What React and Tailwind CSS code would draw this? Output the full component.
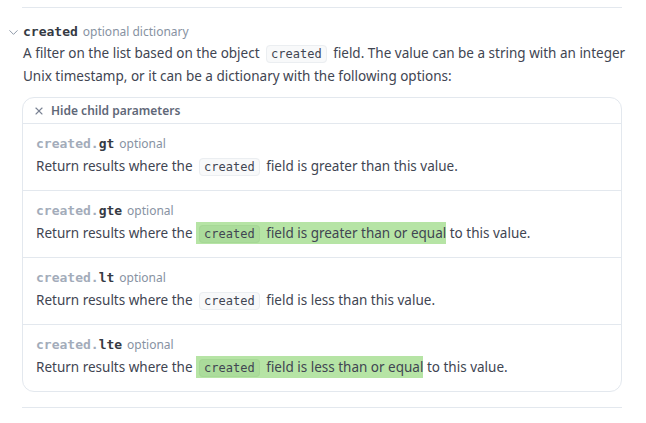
import { ChevronDown, X } from "lucide-react";

const sans = "font-['Noto_Sans',sans-serif]";
const mono = "font-['DejaVu_Sans_Mono',monospace]";

const Code = ({ children, hl }) => (
    <code
        className={`${mono} mx-[3px] rounded-[4px] border px-[4px] py-[1px] text-[12px] ${
            hl ? "border-[#a6d896] bg-[#abdc9b]" : "border-[#ebeef1] bg-[#f8f9fa]"
        }`}
    >
        {children}
    </code>
);

const Row = ({ suffix, before, hl, after, last }) => (
    <div className={`px-[13px] pt-[9px] pb-[12px] ${last ? "" : "border-b border-[#e3e8ee]"}`}>
        <div className="flex items-baseline gap-[5px] leading-[22px]">
            <span className={`${mono} text-[13px] font-bold`}>
                <span className="text-[#a3acba]">created.</span>
                <span className="text-[#353a44]">{suffix}</span>
            </span>
            <span className="text-[12px] text-[#8792a2]">optional</span>
        </div>
        <div className="text-[13.5px] leading-[22px] text-[#414552]">
            Return results where the{" "}
            {hl ? (
                <>
                    <span className="bg-[#b6e4a5] py-[2px]">
                        <Code hl>created</Code> {before}
                    </span>{" "}
                    {after}
                </>
            ) : (
                <>
                    <Code>created</Code> {before}
                </>
            )}
        </div>
    </div>
);

export default function App() {
    return (
        <div className={`${sans} h-[423px] w-[646px] bg-white`}>
            <div className="ml-[22px] w-[600px] pt-[7px]">
                <div className="border-t border-[#e3e8ee]" />
                <div className="relative pt-[14px]">
                    {/* chevron hangs in the left gutter */}
                    <ChevronDown className="absolute left-[-16px] top-[17px] h-[15px] w-[15px] text-[#8792a2]" strokeWidth={1.5} />
                    <div className="flex items-baseline gap-[5px] pl-[1px] leading-[20px]">
                        <span className={`${mono} text-[13px] font-bold text-[#353a44]`}>created</span>
                        <span className="text-[12px] text-[#8792a2]">optional dictionary</span>
                    </div>
                    <p className="-mr-[10px] pl-[1px] text-[13.5px] leading-[22px] text-[#414552]">
                        A filter on the list based on the object <Code>created</Code> field. The value can be a string with an integer
                        Unix timestamp, or it can be a dictionary with the following options:
                    </p>
                </div>
                <div className="mt-[10px] rounded-[12px] border border-[#e3e8ee]">
                    <div className="flex h-[26px] items-center gap-[6px] border-b border-[#e3e8ee] pl-[10px] text-[12px] font-semibold text-[#5f6878]">
                        <X className="h-[12px] w-[12px] text-[#7a8394]" strokeWidth={2.25} />
                        Hide child parameters
                    </div>
                    <Row suffix="gt" before="field is greater than this value." />
                    <Row suffix="gte" hl before="field is greater than or equal" after="to this value." />
                    <Row suffix="lt" before="field is less than this value." />
                    <Row suffix="lte" hl before="field is less than or equal" after="to this value." last />
                </div>
                <div className="mt-[15px] border-t border-[#e3e8ee]" />
            </div>
        </div>
    );
}
